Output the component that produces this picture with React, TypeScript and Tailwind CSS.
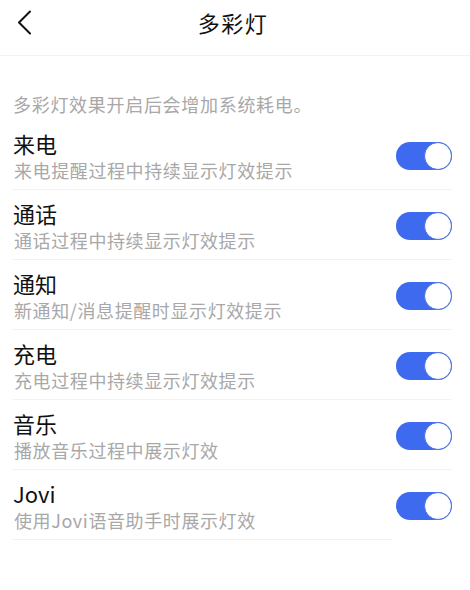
import React from "react";

const items = [
  { title: "来电", desc: "来电提醒过程中持续显示灯效提示" },
  { title: "通话", desc: "通话过程中持续显示灯效提示" },
  { title: "通知", desc: "新通知/消息提醒时显示灯效提示" },
  { title: "充电", desc: "充电过程中持续显示灯效提示" },
  { title: "音乐", desc: "播放音乐过程中展示灯效" },
  { title: "Jovi", desc: "使用Jovi语音助手时展示灯效" },
];

function Toggle() {
  return (
    <div className="w-[56px] h-[28px] rounded-full bg-[#3e6af0] flex items-center justify-end">
      <div className="w-[28px] h-[28px] rounded-full bg-white border-[1.5px] border-[#4a6fe0]" />
    </div>
  );
}

export default function App() {
  return (
    <div
      className="w-[470px] h-[590px] bg-white text-[#111]"
      style={{ fontFamily: '"Noto Sans CJK SC", "Noto Sans", sans-serif' }}
    >
      <div className="h-14 border-b border-[#f3f3f3] flex items-center relative">
        <svg className="absolute left-[16px] top-[10px]" width="18" height="26" viewBox="0 0 18 26" fill="none">
          <path d="M14 1.5 L3 12.5 L14 23.5" stroke="#111" strokeWidth="2" strokeLinecap="round" strokeLinejoin="round" />
        </svg>
        <div className="w-full text-center text-[22px] leading-[28px] tracking-[1.5px] -mt-[12px] pr-[4px]">多彩灯</div>
      </div>
      <div className="px-[13px] mt-[36px] text-[18px] leading-[24px] text-[#a8a8a8] tracking-[0.7px]">
        多彩灯效果开启后会增加系统耗电。
      </div>
      <div className="mt-[4px] pl-3 pr-[18px]">
        {items.map((it, i) => (
          <div
            key={it.title}
            className={
              "flex items-center justify-between pt-[9px] pb-[6px] border-b border-[#f3f3f3] " +
              (i === items.length - 1 ? "w-[380px]" : "")
            }
          >
            <div>
              <div className="text-[22px] leading-[28px] pl-px">{it.title}</div>
              <div className="text-[18px] leading-[26px] text-[#a8a8a8] pl-[2px] tracking-[0.6px]">{it.desc}</div>
            </div>
            {i === items.length - 1 ? (
              <div className="-mr-[60px]"><Toggle /></div>
            ) : (
              <Toggle />
            )}
          </div>
        ))}
      </div>
    </div>
  );
}
